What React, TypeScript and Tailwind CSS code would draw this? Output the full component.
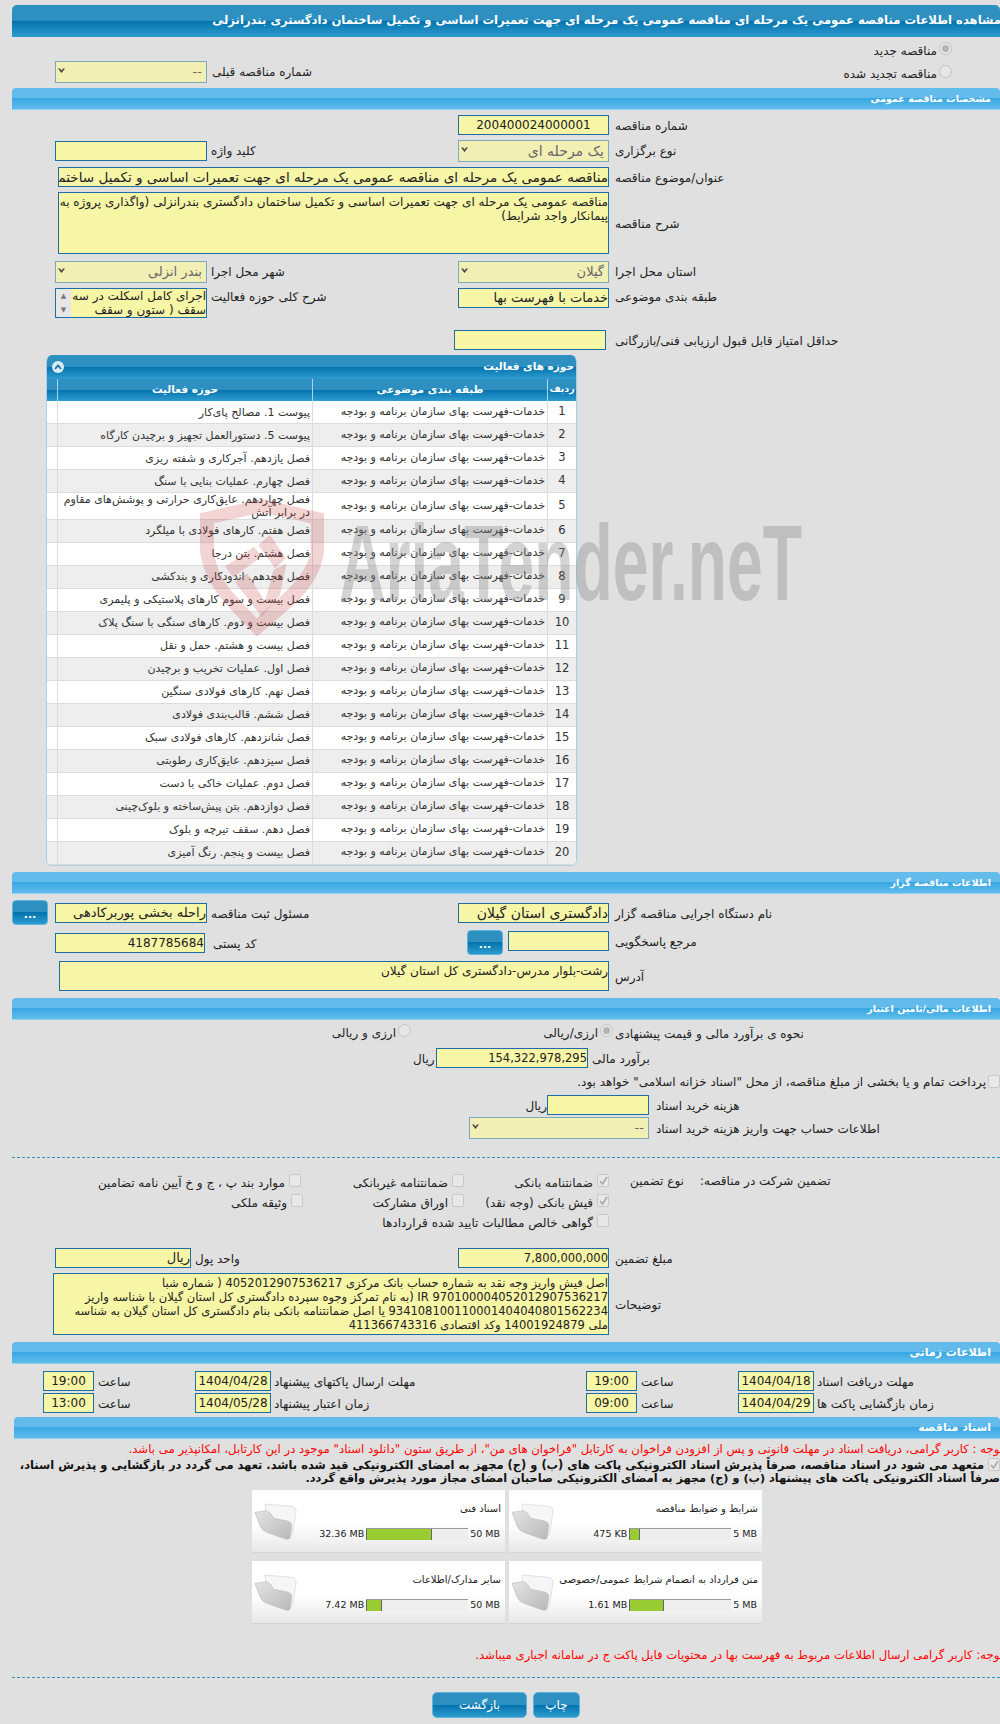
// Tender detail page (fixed 1000px wide form)
import React from 'react'

const font = "font-['DejaVu_Sans',sans-serif]"
const blueBar = 'bg-[linear-gradient(#2e90c0_0%,#2e90c0_48%,#0373ae_50%,#2f9ccf_100%)]'
const sectionBar = 'bg-[linear-gradient(#62bbea_0%,#62bbea_48%,#3aa8e3_50%,#60bbec_100%)]'
const twoCols = 'grid grid-cols-[55px_152px_251px_151px_1fr] items-start'

function Section({ title, className = '' }: { title: string; className?: string }) {
  return (
    <div
      dir="rtl"
      className={`h-[22px] ml-[12px] rounded-t-[4px] ${sectionBar} border-b border-[#8fd0f0] pr-[9px] font-bold text-white leading-[21px] ${className}`}
    >
      {title}
    </div>
  )
}

function Box({ children, multi, className = '' }: { children?: React.ReactNode; multi?: boolean; className?: string }) {
  return (
    <div
      dir="rtl"
      className={`border border-[#1c6ea4] bg-[#f7f5a6] text-[#222] overflow-hidden whitespace-nowrap ${multi ? 'leading-[14px] pt-[2px]' : 'h-[20px] leading-[18px]'} ${className}`}
    >
      {children}
    </div>
  )
}

function Select({ value, className = '' }: { value: string; className?: string }) {
  return (
    <div
      dir="rtl"
      className={`h-[22px] border border-[#7ea9bd] bg-[#f2efb5] flex items-center justify-between pr-[4px] pl-[1px] text-[#666] ${className}`}
    >
      <span>{value}</span>
      <svg width="9" height="7" viewBox="0 0 9 7" className="mb-[3px]">
        <path d="M1 1.5 L4.5 6 L8 1.5 L6 1.5 L4.5 3.5 L3 1.5 Z" fill="#444" />
      </svg>
    </div>
  )
}

function Label({ children, className = '' }: { children: React.ReactNode; className?: string }) {
  return (
    <div dir="rtl" className={`h-[20px] text-[12px] leading-[23px] text-[#222] whitespace-nowrap text-left ${className}`}>
      {children}
    </div>
  )
}

function Radio({ on }: { on?: boolean }) {
  return (
    <span className="inline-flex items-center justify-center w-[13px] h-[13px] rounded-full border border-[#c4c4c4] bg-[#e6e6e6] shrink-0 -mt-[5px]">
      {on && <span className="w-[7px] h-[7px] rounded-full bg-[#b5b5b5]" />}
    </span>
  )
}

function Check({ on }: { on?: boolean }) {
  return (
    <span className="inline-flex items-center justify-center w-[12px] h-[13px] rounded-[2px] border border-[#c8c8c8] bg-[#e8e8e8] shrink-0">
      {on && (
        <svg width="9" height="9" viewBox="0 0 9 9">
          <path d="M1 5 L3.5 8 L8 1" stroke="#a8a8a8" strokeWidth="1.6" fill="none" />
        </svg>
      )}
    </span>
  )
}

function DotsButton({ className = '' }: { className?: string }) {
  return (
    <div className={`w-[36px] h-[25px] rounded-[4px] ${blueBar} border border-[#5cb3dc] text-white text-[11px] font-bold leading-[28px] text-center ${className}`}>
      ...
    </div>
  )
}

function CheckOption({ label, on, width }: { label: string; on?: boolean; width: string }) {
  return (
    <div dir="rtl" className={`flex items-center gap-[4px] text-[12px] text-[#222] whitespace-nowrap ${width}`}>
      <span className="-mt-[5px] inline-flex"><Check on={on} /></span>
      <span>{label}</span>
    </div>
  )
}

const activities = [
  'پیوست 1. مصالح پای‌کار',
  'پیوست 5. دستورالعمل تجهیز و برچیدن کارگاه',
  'فصل یازدهم. آجرکاری و شفته ریزی',
  'فصل چهارم. عملیات بنایی با سنگ',
  'فصل چهاردهم. عایق‌کاری حرارتی و پوشش‌های مقاوم در برابر آتش',
  'فصل هفتم. کارهای فولادی با میلگرد',
  'فصل هشتم. بتن درجا',
  'فصل هجدهم. اندودکاری و بندکشی',
  'فصل بیست و سوم کارهای پلاستیکی و پلیمری',
  'فصل بیست و دوم. کارهای سنگی با سنگ پلاک',
  'فصل بیست و هشتم. حمل و نقل',
  'فصل اول. عملیات تخریب و برچیدن',
  'فصل نهم. کارهای فولادی سنگین',
  'فصل ششم. قالب‌بندی فولادی',
  'فصل شانزدهم. کارهای فولادی سبک',
  'فصل سیزدهم. عایق‌کاری رطوبتی',
  'فصل دوم. عملیات خاکی با دست',
  'فصل دوازدهم. بتن پیش‌ساخته و بلوک‌چینی',
  'فصل دهم. سقف تیرچه و بلوک',
  'فصل بیست و پنجم. رنگ آمیزی',
]

function ActivityTable() {
  return (
    <div dir="rtl" className="ml-[46px] mt-[5px] w-[531px] rounded-[6px] overflow-hidden border-x border-b border-[#a9cfe6] bg-white">
      <div className={`h-[24px] ${blueBar} flex items-center justify-between px-[2px] text-[10.5px] font-bold text-white`}>
        <span>حوزه های فعالیت</span>
        <span className="w-[12px] h-[12px] mx-[3px] rounded-full bg-[#dcecf5] flex items-center justify-center">
          <svg width="8" height="6" viewBox="0 0 8 6">
            <path d="M1 5 L4 1.5 L7 5" stroke="#1b78ab" strokeWidth="1.8" fill="none" />
          </svg>
        </span>
      </div>
      <div className={`h-[22px] ${blueBar} grid grid-cols-[29px_235px_255px_1fr] text-[10.5px] font-bold text-white text-center leading-[20px]`}>
        <div className="border-l border-[#a9d6ee] text-[9.5px]">ردیف</div>
        <div className="border-l border-[#a9d6ee]">طبقه بندی موضوعی</div>
        <div className="border-l border-[#a9d6ee]">حوزه فعالیت</div>
        <div />
      </div>
      {activities.map((a, i) => (
        <div
          key={i}
          className={`grid grid-cols-[29px_235px_255px_1fr] border-b border-[#dcdcdc] text-[11px] text-[#333] ${i === 4 ? 'h-[26.6px]' : 'h-[23px]'} ${i % 2 ? 'bg-[#eeeeee]' : 'bg-white'}`}
        >
          <div className="border-l border-[#dcdcdc] text-center text-[11.5px] flex items-center justify-center">{i + 1}</div>
          <div className="border-l border-[#dcdcdc] pr-[2px] flex items-center whitespace-nowrap">خدمات-فهرست بهای سازمان برنامه و بودجه</div>
          <div className="border-l border-[#dcdcdc] pr-[2px] flex items-center leading-[13px]">{a}</div>
          <div />
        </div>
      ))}
    </div>
  )
}

function FolderIcon() {
  return (
    <svg width="60" height="60" viewBox="0 0 180 180" className="shrink-0 -ml-[5px] -mt-[1px]">
      <defs>
        <linearGradient id="folderBody" x1="0" y1="0" x2="1" y2="1">
          <stop offset="0" stopColor="#e4e4e4" />
          <stop offset="1" stopColor="#b8b8b8" />
        </linearGradient>
      </defs>
      <path d="M45 45 L125 52 Q140 55 138 70 L126 140 L50 90 Z" fill="#f6f6f6" stroke="#d4d4d4" strokeWidth="2" />
      <path d="M15 70 L50 65 Q60 68 72 88 L112 96 Q126 100 125 112 L120 148 Q116 154 100 148 L50 130 Q36 124 30 110 Z" fill="url(#folderBody)" stroke="#bdbdbd" strokeWidth="2" />
    </svg>
  )
}

function DocCard({ title, used, max, pct }: { title: string; used: string; max: string; pct: number }) {
  return (
    <div dir="rtl" className="h-[63px] w-[253px] bg-[linear-gradient(#ffffff_55%,#e8e8e8_100%)] border-b border-[#d4d4d4] flex justify-between pr-[3px] pl-[3px]">
      <div className="flex-1 min-w-0">
        <div className="text-[10px] text-[#222] mt-[12px] leading-[14px] pr-[1px] whitespace-nowrap">{title}</div>
        <div className="flex items-center mt-[11px] text-[9.5px] text-[#222]">
          <span dir="ltr" className="px-[2px] shrink-0 whitespace-nowrap">{max}</span>
          <div dir="ltr" className="w-[102px] h-[12px] bg-[#eeeeee] border-t border-[#999] shrink-0">
            <div className="h-full bg-[#99cc33] border-l border-r border-[#666]" style={{ width: `${pct}%` }} />
          </div>
          <span dir="ltr" className="pr-[2px] whitespace-nowrap">{used}</span>
        </div>
      </div>
      <FolderIcon />
    </div>
  )
}

function PillButton({ children, width }: { children: React.ReactNode; width: string }) {
  return (
    <div className={`h-[26px] ${width} rounded-[5px] ${blueBar} border border-[#5cb3dc] text-white text-[12px] leading-[24px] text-center`}>
      {children}
    </div>
  )
}

export default function App() {
  return (
    <div className={`relative w-[1000px] h-[1724px] overflow-hidden bg-[#e0e0e0] ${font}`}>
      {/* عنوان صفحه */}
      <div dir="rtl" className={`mt-[5px] ml-[12px] h-[32px] rounded-t-[5px] ${blueBar} text-[11.6px] font-bold text-white leading-[30px] whitespace-nowrap overflow-hidden`}>
        <div className="-mr-[1px]">مشاهده اطلاعات مناقصه عمومی یک مرحله ای مناقصه عمومی یک مرحله ای جهت تعمیرات اساسی و تکمیل ساختمان دادگستری بندرانزلی</div>
      </div>

      {/* مناقصه جدید / تجدید شده */}
      <div className="h-[51px] flex justify-between">
        <div className="ml-[55px] mt-[24px] flex">
          <Select value="--" className="w-[152px] text-[13px]" />
          <Label className="ml-[5px]">شماره مناقصه قبلی</Label>
        </div>
        <div dir="rtl" className="mr-[48px] mt-[7px] flex flex-col gap-[9px] text-[12px] text-[#222]">
          <div className="flex items-center gap-[2px] h-[14px]"><Radio on /><span>مناقصه جدید</span></div>
          <div className="flex items-center gap-[2px] h-[14px]"><Radio /><span>مناقصه تجدید شده</span></div>
        </div>
      </div>

      <Section title="مشخصات مناقصه عمومی" className="text-[9.5px]" />

      <div className={`${twoCols} mt-[5px]`}>
        <div /><div /><div />
        <Box className="text-center text-[12px]">200400024000001</Box>
        <Label className="pl-[6px]">شماره مناقصه</Label>
      </div>
      <div className={`${twoCols} mt-[5px]`}>
        <div />
        <Box className="mt-[1px]" />
        <Label className="pl-[4px]">کلید واژه</Label>
        <Select value="یک مرحله ای" className="text-[14px]" />
        <Label className="pl-[6px]">نوع برگزاری</Label>
      </div>
      <div className="grid grid-cols-[58px_551px_1fr] items-start mt-[5px]">
        <div />
        <Box className="text-[13.5px]">مناقصه عمومی یک مرحله ای مناقصه عمومی یک مرحله ای جهت تعمیرات اساسی و تکمیل ساختمان دادگستری بندرانزلی</Box>
        <Label className="pl-[6px]">عنوان/موضوع مناقصه</Label>
      </div>
      <div className="grid grid-cols-[58px_551px_1fr] items-center mt-[5px]">
        <div />
        <Box multi className="h-[62px] text-[12px]">
          <div>مناقصه عمومی یک مرحله ای جهت تعمیرات اساسی و تکمیل ساختمان دادگستری بندرانزلی (واگذاری پروژه به</div>
          <div>پیمانکار واجد شرایط)</div>
        </Box>
        <Label className="pl-[6px]">شرح مناقصه</Label>
      </div>
      <div className={`${twoCols} mt-[7px]`}>
        <div />
        <Select value="بندر انزلی" className="text-[13px]" />
        <Label className="pl-[4px]">شهر محل اجرا</Label>
        <Select value="گیلان" className="text-[13px]" />
        <Label className="pl-[6px]">استان محل اجرا</Label>
      </div>
      <div className={`${twoCols} mt-[5px] h-[30px]`}>
        <div />
        <div dir="rtl" className="h-[30px] border border-[#1c6ea4] bg-[#f7f5a6] flex text-[12px] leading-[14px] text-[#222]">
          <div className="flex-1 overflow-hidden">اجرای کامل اسکلت در سه سقف ( ستون و سقف</div>
          <div className="w-[15px] bg-[#e6e6e6] flex flex-col items-center justify-between py-[3px] text-[7px] text-[#777] leading-[8px]">
            <span>▲</span><span>▼</span>
          </div>
        </div>
        <Label className="pl-[4px] -mt-[2px]">شرح کلی حوزه فعالیت</Label>
        <Box className="text-[13px]">خدمات با فهرست بها</Box>
        <Label className="pl-[6px] -mt-[2px]">طبقه بندی موضوعی</Label>
      </div>
      <div className="flex mt-[12px] ml-[454px]">
        <Box className="w-[152px]" />
        <Label className="pl-[9px]">حداقل امتیاز قابل قبول ارزیابی فنی/بازرگانی</Label>
      </div>

      <ActivityTable />

      <Section title="اطلاعات مناقصه گزار" className="mt-[6px] text-[9.5px]" />
      <div className={`${twoCols} mt-[6px] h-[25px]`}>
        <div className="pl-[12px]"><DotsButton /></div>
        <Box className="mt-[3px] text-[13px]">راحله بخشی پوربرکادهی</Box>
        <Label className="pl-[4px] mt-[3px]">مسئول ثبت مناقصه</Label>
        <Box className="mt-[3px] text-[14px]">دادگستری استان گیلان</Box>
        <Label className="pl-[6px] mt-[3px]">نام دستگاه اجرایی مناقصه گزار</Label>
      </div>
      <div className="grid grid-cols-[55px_150px_262px_36px_5px_101px_1fr] items-start mt-[5px] h-[25px]">
        <div />
        <Box className="mt-[3px] text-[12px]">4187785684</Box>
        <Label className="pl-[8px] mt-[3px]">کد پستی</Label>
        <DotsButton />
        <div />
        <Box className="mt-[1px]" />
        <Label className="pl-[6px] mt-[1px]">مرجع پاسخگویی</Label>
      </div>
      <div className="grid grid-cols-[59px_550px_1fr] items-center mt-[6px]">
        <div />
        <Box multi className="h-[30px] text-[12px]">رشت-بلوار مدرس-دادگستری کل استان گیلان</Box>
        <Label className="pl-[6px]">آدرس</Label>
      </div>

      <Section title="اطلاعات مالی/تامین اعتبار" className="mt-[7px] text-[9.5px]" />
      <div className="flex items-center h-[20px] mt-[3px]">
        <div dir="rtl" className="ml-[342px] w-[69px] flex items-center gap-[2px] text-[12px] text-[#222] whitespace-nowrap"><Radio /><span>ارزی و ریالی</span></div>
        <div dir="rtl" className="ml-[127px] w-[75px] flex items-center gap-[2px] text-[12px] text-[#222] whitespace-nowrap"><Radio on /><span>ارزی/ریالی</span></div>
        <Label className="ml-[2px]">نحوه ی برآورد مالی و قیمت پیشنهادی</Label>
      </div>
      <div className="flex items-center mt-[5px] ml-[413px]">
        <Label className="w-[23px]">ریال</Label>
        <Box className="w-[152px] text-[11.5px]">154,322,978,295</Box>
        <Label className="pl-[4px]">برآورد مالی</Label>
      </div>
      <div dir="rtl" className="flex items-center gap-[2px] mt-[6px] h-[16px] text-[12px] text-[#222] whitespace-nowrap">
        <Check />
        <span>پرداخت تمام و یا بخشی از مبلغ مناقصه، از محل "اسناد خزانه اسلامی" خواهد بود.</span>
      </div>
      <div className="flex items-center mt-[5px] ml-[527px]">
        <Label className="w-[20px]">ریال</Label>
        <Box className="w-[102px]" />
        <Label className="pl-[7px]">هزینه خرید اسناد</Label>
      </div>
      <div className="flex items-center mt-[2px] ml-[469px]">
        <Select value="--" className="w-[180px] text-[13px]" />
        <Label className="pl-[7px]">اطلاعات حساب جهت واریز هزینه خرید اسناد</Label>
      </div>

      <div className="mt-[18px] ml-[12px] border-t border-dashed border-[#3d8fb8]" />

      {/* تضمین */}
      <div className="mt-[17px] h-[16px] flex items-center">
        <div className="ml-[100px] w-[201px]"><CheckOption label="موارد بند پ ، ج و خ آیین نامه تضامین" width="w-full text-[11.6px]" /></div>
        <CheckOption label="ضمانتنامه غیربانکی" width="w-[114px] ml-[49px]" />
        <CheckOption label="ضمانتنامه بانکی" on width="w-[96px] ml-[49px]" />
        <Label className="ml-[21px] -mt-[5px]">نوع تضمین</Label>
        <Label className="ml-[16px] -mt-[5px]">تضمین شرکت در مناقصه:</Label>
      </div>
      <div className="mt-[4px] h-[16px] flex items-center">
        <CheckOption label="وثیقه ملکی" width="w-[74px] ml-[229px]" />
        <CheckOption label="اوراق مشارکت" width="w-[88px] ml-[73px]" />
        <CheckOption label="فیش بانکی (وجه نقد)" on width="w-[130px] ml-[15px]" />
      </div>
      <div className="mt-[4px] h-[16px] flex items-center">
        <CheckOption label="گواهی خالص مطالبات تایید شده قراردادها" on={false} width="w-[224px] ml-[385px]" />
      </div>

      <div className="grid grid-cols-[55px_136px_267px_151px_1fr] items-start mt-[17px]">
        <div />
        <Box className="text-[13px]">ریال</Box>
        <Label className="pl-[4px]">واحد پول</Label>
        <Box className="text-[11.5px]">7,800,000,000</Box>
        <Label className="pl-[6px]">مبلغ تضمین</Label>
      </div>
      <div className="grid grid-cols-[53px_556px_1fr] items-center mt-[5px]">
        <div />
        <Box multi className="h-[62px] text-[11.5px]">
          <div>اصل فیش واریز وجه نقد به شماره حساب بانک مرکزی 4052012907536217 ( شماره شبا</div>
          <div>IR 970100004052012907536217 (به نام تمرکز وجوه سپرده دادگستری کل استان گیلان با شناسه واریز</div>
          <div>934108100110001404040801562234 یا اصل ضمانتنامه بانکی بنام دادگستری کل استان گیلان به شناسه</div>
          <div>ملی 14001924879 وکد اقتصادی 411366743316</div>
        </Box>
        <Label className="pl-[6px]">توضیحات</Label>
      </div>

      <Section title="اطلاعات زمانی" className="mt-[7px] text-[11px]" />
      {[
        ['19:00', '1404/04/28', 'مهلت ارسال پاکتهای پیشنهاد', '19:00', '1404/04/18', 'مهلت دریافت اسناد'],
        ['13:00', '1404/05/28', 'زمان اعتبار پیشنهاد', '09:00', '1404/04/29', 'زمان بازگشایی پاکت ها'],
      ].map((r, i) => (
        <div key={i} className={`grid grid-cols-[43px_51px_101px_76px_315px_51px_101px_76px_1fr] items-start ${i === 0 ? 'mt-[7px]' : 'mt-[2px]'}`}>
          <div />
          <Box className="text-center text-[12px]">{r[0]}</Box>
          <Label className="pl-[4px]">ساعت</Label>
          <Box className="text-center text-[12px]">{r[1]}</Box>
          <Label className="pl-[3px]">{r[2]}</Label>
          <Box className="text-center text-[12px]">{r[3]}</Box>
          <Label className="pl-[4px]">ساعت</Label>
          <Box className="text-center text-[12px]">{r[4]}</Box>
          <Label className="pl-[3px]">{r[5]}</Label>
        </div>
      ))}

      <Section title="اسناد مناقصه" className="mt-[4px] !ml-[14px] text-[11px]" />

      <div dir="rtl" className="mr-[-3px] mt-[2px] text-[11.7px] leading-[16px] text-[#f00] whitespace-nowrap">
        توجه : کاربر گرامی، دریافت اسناد در مهلت قانونی و پس از افزودن فراخوان به کارتابل "فراخوان های من"، از طریق ستون "دانلود اسناد" موجود در این کارتابل، امکانپذیر می باشد.
      </div>
      <div dir="rtl" className="mt-[1px] font-bold leading-[14px] text-[#111] whitespace-nowrap">
        <div className="text-[11.45px]"><Check on /> متعهد می شود در اسناد مناقصه، صرفاً پذیرش اسناد الکترونیکی پاکت های (ب) و (ج) مجهز به امضای الکترونیکی قید شده باشد. تعهد می گردد در بازگشایی و پذیرش اسناد،</div>
        <div className="text-[11.3px]">صرفاً اسناد الکترونیکی پاکت های پیشنهاد (ب) و (ج) مجهز به امضای الکترونیکی صاحبان امضای مجاز مورد پذیرش واقع گردد.</div>
      </div>

      <div className="ml-[252px] mt-[4px] w-[510px] grid grid-cols-[253px_253px] gap-x-[4px] gap-y-[8px]">
        <DocCard title="اسناد فنی" used="32.36 MB" max="50 MB" pct={65} />
        <DocCard title="شرایط و ضوابط مناقصه" used="475 KB" max="5 MB" pct={11} />
        <DocCard title="سایر مدارک/اطلاعات" used="7.42 MB" max="50 MB" pct={16} />
        <DocCard title="متن قرارداد به انضمام شرایط عمومی/خصوصی" used="1.61 MB" max="5 MB" pct={34} />
      </div>

      <div dir="rtl" className="mt-[23px] mr-[-3px] text-[11.7px] leading-[16px] text-[#f00] whitespace-nowrap">
        توجه: کاربر گرامی ارسال اطلاعات مربوط به فهرست بها در محتویات فایل پاکت ج در سامانه اجباری میباشد.
      </div>

      <div className="mt-[14px] ml-[12px] border-t border-dashed border-[#3d8fb8]" />

      <div className="mt-[14px] ml-[432px] flex gap-[6px]">
        <PillButton width="w-[95px]">بازگشت</PillButton>
        <PillButton width="w-[47px]">چاپ</PillButton>
      </div>

      {/* واترمارک */}
      <div className="absolute left-[190px] top-[495px] pointer-events-none">
        <svg width="150" height="150" viewBox="0 0 450 450">
          <path
            fillRule="evenodd"
            d="M30 55 L215 12 L402 55 L402 170 Q390 260 300 340 L200 425 L110 330 Q40 250 30 170 Z M72 85 L72 170 Q80 240 135 300 L200 370 L270 305 Q350 235 362 170 L362 85 L215 52 Z"
            fill="#c83c3c"
            fillOpacity="0.22"
          />
          <path d="M105 215 L192 155 L215 185 L130 247 Z M205 150 L240 120 L288 190 L255 220 Z M135 262 L172 235 L225 320 L250 225 L290 205 L270 300 L215 365 Z" fill="#c83c3c" fillOpacity="0.22" />
        </svg>
      </div>
      <div dir="ltr" className="absolute left-[339px] top-[503px] origin-top-left scale-x-[0.595] pointer-events-none font-['Liberation_Sans',sans-serif] font-bold text-[108px] leading-[120px] text-[#808080]/35 whitespace-nowrap">
        AriaTender.neT
      </div>
    </div>
  )
}
